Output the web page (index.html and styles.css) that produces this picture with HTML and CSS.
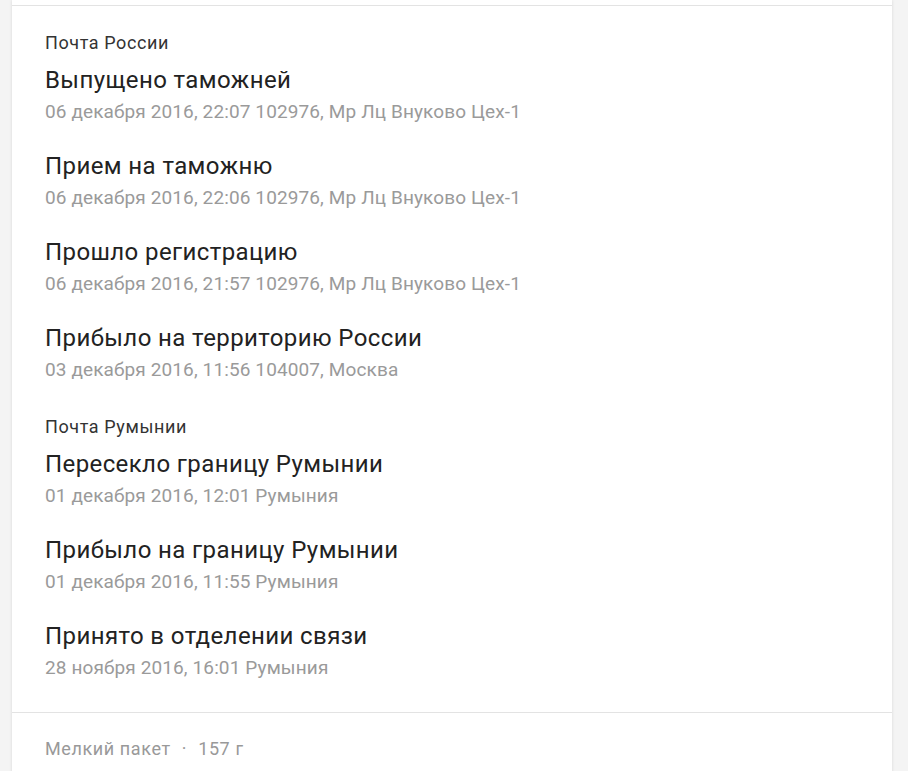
FILE: index.html
```html
<!DOCTYPE html>
<html lang="ru">
<head>
    <meta charset="UTF-8">
    <meta name="viewport" content="width=device-width, initial-scale=1.0">
    <link rel="stylesheet" href="styles.css">
    <title>Отслеживание</title>
</head>
<body>
    <div class="page">
        <div class="card">
            <div class="card-top"></div>
            <div class="history">
                <div class="group">
                    <div class="group-name">Почта России</div>
                    <div class="event">
                        <div class="event-title">Выпущено таможней</div>
                        <div class="event-info">06 декабря 2016, 22:07 102976, Мр Лц Внуково Цех-1</div>
                    </div>
                    <div class="event">
                        <div class="event-title">Прием на таможню</div>
                        <div class="event-info">06 декабря 2016, 22:06 102976, Мр Лц Внуково Цех-1</div>
                    </div>
                    <div class="event">
                        <div class="event-title">Прошло регистрацию</div>
                        <div class="event-info">06 декабря 2016, 21:57 102976, Мр Лц Внуково Цех-1</div>
                    </div>
                    <div class="event">
                        <div class="event-title">Прибыло на территорию России</div>
                        <div class="event-info">03 декабря 2016, 11:56 104007, Москва</div>
                    </div>
                </div>
                <div class="group">
                    <div class="group-name">Почта Румынии</div>
                    <div class="event">
                        <div class="event-title">Пересекло границу Румынии</div>
                        <div class="event-info">01 декабря 2016, 12:01 Румыния</div>
                    </div>
                    <div class="event">
                        <div class="event-title">Прибыло на границу Румынии</div>
                        <div class="event-info">01 декабря 2016, 11:55 Румыния</div>
                    </div>
                    <div class="event">
                        <div class="event-title">Принято в отделении связи</div>
                        <div class="event-info">28 ноября 2016, 16:01 Румыния</div>
                    </div>
                </div>
            </div>
            <div class="card-footer">
                <span>Мелкий пакет</span>
                <span class="dot">·</span>
                <span>157 г</span>
            </div>
        </div>
    </div>
</body>
</html>
```

FILE: styles.css
```css
html, body {
    margin: 0;
    padding: 0;
    background-color: #f4f4f4;
    font-family: Roboto, "Noto Sans", sans-serif;
}
.page {
    padding-left: 12px;
    width: 880px;
}
.card {
    background-color: #fff;
    box-shadow: 0 0 3px rgba(0, 0, 0, 0.12);
}
.card-top {
    height: 5px;
    border-bottom: 1px solid #e3e3e3;
}
.history {
    padding: 26px 33px 28px;
}
.group {
    margin-bottom: 30px;
}
.group:last-child {
    margin-bottom: 0;
}
.group-name {
    font-size: 18px;
    line-height: 22px;
    letter-spacing: 0.6px;
    color: #333;
    margin-bottom: 11px;
}
.event {
    margin-bottom: 23px;
}
.event:last-child {
    margin-bottom: 0;
}
.event-title {
    font-size: 24px;
    line-height: 30px;
    letter-spacing: 0.4px;
    color: #222;
}
.event-info {
    font-size: 19px;
    line-height: 33px;
    letter-spacing: 0.12px;
    color: #9a9a9a;
}
.card-footer {
    border-top: 1px solid #e3e3e3;
    padding: 25px 33px 19px;
    font-size: 18px;
    line-height: 22px;
    letter-spacing: 0.6px;
    color: #999;
}
.dot {
    margin: 0 6px;
}
```
